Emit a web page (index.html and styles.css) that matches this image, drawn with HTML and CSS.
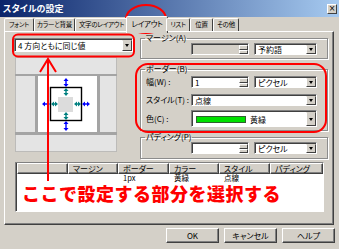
FILE: index.html
```html
<!DOCTYPE html>
<html lang="ja">
<head>
<meta charset="UTF-8">
<title>スタイルの設定</title>
<link rel="stylesheet" href="styles.css">
</head>
<body>
<div class="dlg">
  <div class="title">
    <span>スタイルの設定</span>
    <span class="close">×</span>
  </div>
  <div class="tabs">
    <div class="tab">フォント</div>
    <div class="tab">カラーと背景</div>
    <div class="tab">文字のレイアウト</div>
    <div class="tab on">レイアウト</div>
    <div class="tab">リスト</div>
    <div class="tab">位置</div>
    <div class="tab">その他</div>
  </div>
  <div class="panel">
    <div class="top">
      <div class="left">
        <div class="sel combo"><span class="v">4 方向ともに同じ値</span><span class="dd"></span></div>
        <svg class="pv" width="102" height="95" viewBox="0 0 102 95">
          <rect x="0.5" y="0.5" width="101" height="94" fill="#e4e4e4" stroke="#9c9c9c" stroke-dasharray="1 1"/>
          <rect x="0" y="17" width="102" height="2" fill="#a4a4a4"/>
          <rect x="0" y="75" width="102" height="3" fill="#a4a4a4"/>
          <rect x="20" y="19" width="3" height="56" fill="#a4a4a4"/>
          <rect x="82" y="19" width="3" height="56" fill="#a4a4a4"/>
          <rect x="23" y="19" width="59" height="56" fill="#fff"/>
          <rect x="43" y="40" width="15" height="15" fill="#dcdcdc"/>
          <rect x="35.5" y="30.5" width="31" height="33" fill="none" stroke="#000" stroke-width="1.4"/>
          <g stroke="#0000ff" stroke-width="1.4">
            <path d="M51 23V28M51 66V72M29 47H33M69 47H73"/>
          </g>
          <g fill="#0000ff">
            <path d="M48.5 24L51 21 53.5 24ZM48.5 27L51 30 53.5 27Z"/>
            <path d="M48.5 67L51 64 53.5 67ZM48.5 71L51 74 53.5 71Z"/>
            <path d="M30 44.5L27 47 30 49.5ZM32 44.5L35 47 32 49.5Z"/>
            <path d="M70 44.5L67 47 70 49.5ZM72 44.5L75 47 72 49.5Z"/>
          </g>
          <g stroke="#008080" stroke-width="1.4">
            <path d="M51 33V37M51 58V61M38 47H40M61 47H64"/>
          </g>
          <g fill="#008080">
            <path d="M48.5 34L51 31 53.5 34ZM48.5 36L51 39 53.5 36Z"/>
            <path d="M48.5 58L51 55 53.5 58ZM48.5 60L51 63 53.5 60Z"/>
            <path d="M39 44.5L36 47 39 49.5ZM40 44.5L43 47 40 49.5Z"/>
            <path d="M62 44.5L59 47 62 49.5ZM63 44.5L66 47 63 49.5Z"/>
          </g>
        </svg>
      </div>
      <div class="right">
        <fieldset class="grp g1">
          <legend>マージン(A)</legend>
          <div class="fld">
            <span class="lbl"></span>
            <div class="edit off"><span class="v"></span><span class="spn"><i></i><i></i></span></div>
            <div class="sel unit"><span class="v">予約語</span><span class="dd"></span></div>
          </div>
        </fieldset>
        <fieldset class="grp g2">
          <legend>ボーダー(B)</legend>
          <div class="fld">
            <span class="lbl">幅(W) :</span>
            <div class="edit"><span class="v">1</span><span class="spn"><i></i><i></i></span></div>
            <div class="sel unit"><span class="v">ピクセル</span><span class="dd"></span></div>
          </div>
          <div class="fld f2">
            <span class="lbl">スタイル(T) :</span>
            <div class="sel wide"><span class="v">点線</span><span class="dd"></span></div>
          </div>
          <div class="fld f3">
            <span class="lbl">色(C) :</span>
            <div class="sel wide color"><span class="sw"></span><span class="v">黄緑</span><span class="dd"></span></div>
          </div>
        </fieldset>
        <fieldset class="grp g3">
          <legend>パディング(P)</legend>
          <div class="fld">
            <span class="lbl"></span>
            <div class="edit"><span class="v"></span><span class="spn"><i></i><i></i></span></div>
            <div class="sel unit"><span class="v">ピクセル</span><span class="dd"></span></div>
          </div>
        </fieldset>
      </div>
    </div>
    <div class="list">
      <div class="hdr"><span></span><span>マージン</span><span>ボーダー</span><span>カラー</span><span>スタイル</span><span>パディング</span></div>
      <div class="row"><span></span><span></span><span>1px</span><span>黄緑</span><span>点線</span><span></span></div>
    </div>
  </div>
  <div class="btns">
    <div class="btn">OK</div>
    <div class="btn">キャンセル</div>
    <div class="btn">ヘルプ</div>
  </div>

  <svg class="marks" width="339" height="249" viewBox="0 0 339 249">
    <ellipse cx="146" cy="19" rx="20" ry="14" fill="none" stroke="#ff0000" stroke-width="2"/>
    <rect x="13" y="34.5" width="121" height="22" rx="5" fill="none" stroke="#ff0000" stroke-width="2"/>
    <rect x="136" y="64" width="190" height="68" rx="12" fill="none" stroke="#ff0000" stroke-width="2"/>
    <path d="M48 59V181M40 72L48 59 56 72" fill="none" stroke="#ff0000" stroke-width="2"/>
  </svg>
  <div class="note">ここで設定する部分を選択する</div>
</div>
</body>
</html>
```

FILE: styles.css
```css
* { box-sizing: border-box; }
body { margin: 0; background: #d4d0c8; font-family: "Noto Sans CJK JP", "Liberation Sans", sans-serif; font-size: 8px; line-height: 10px; font-feature-settings: "palt"; color: #000; }
.dlg { position: relative; width: 339px; height: 249px; background: #d4d0c8; overflow: hidden; }

.title { height: 17px; background: linear-gradient(to right, #0a246a, #a6caf0); color: #fff; font-weight: bold; font-size: 9px; display: flex; align-items: center; justify-content: space-between; padding: 0 2px 0 3px; }
.close { width: 10px; height: 10px; background: #d4d0c8; color: #000; border: 1px solid; border-color: #fff #404040 #404040 #fff; font-family: "DejaVu Sans", sans-serif; font-size: 8px; line-height: 7px; text-align: center; font-weight: normal; }

.tabs { position: relative; z-index: 1; display: flex; align-items: flex-start; height: 14px; padding-left: 4px; }
.tab { height: 13px; margin-top: 1px; border: 1px solid; border-bottom: 0; border-color: #fff #404040 transparent #fff; border-radius: 2px 2px 0 0; display: flex; justify-content: center; font-size: 6.5px; letter-spacing: -0.3px; line-height: 11px; white-space: nowrap; background: #d4d0c8; }
.tab:nth-child(1) { width: 30px; }
.tab:nth-child(2) { width: 41px; }
.tab:nth-child(3) { width: 53px; }
.tab:nth-child(4) { width: 42px; }
.tab:nth-child(5) { width: 24px; }
.tab:nth-child(6) { width: 23px; }
.tab:nth-child(7) { width: 26px; }
.tab.on { height: 17px; margin: -1px -2px 0; line-height: 14px; font-size: 7.5px; }

.panel { margin-left: 4px; width: 330px; height: 194px; border: 1px solid; border-color: #fff #404040 #404040 #fff; box-shadow: inset -1px -1px #808080; padding: 1px 5px 0 9px; }
.top { display: flex; gap: 7px; }
.left { width: 119px; padding-top: 5px; }
.right { width: 188px; }
.pv { display: block; margin: 5px 0 0 1px; }

.sel, .edit { display: flex; align-items: stretch; height: 12px; background: #fff; border: 1px solid; border-color: #808080 #fff #fff #808080; box-shadow: inset 1px 1px #404040; padding: 1px 0 0 1px; }
.sel .v, .edit .v { flex: 1; padding-left: 2px; line-height: 9px; white-space: nowrap; }
.dd { width: 10px; background: #d4d0c8; border: 1px solid; border-color: #d4d0c8 #404040 #404040 #fff; display: flex; align-items: center; justify-content: center; }
.dd::after { content: ""; border-left: 2px solid transparent; border-right: 2px solid transparent; border-top: 3px solid #000; }
.combo { height: 14px; }
.combo .v { line-height: 11px; }
.edit { width: 58px; }
.edit.off { background: #d4d0c8; }
.spn { width: 9px; display: flex; flex-direction: column; }
.spn i { flex: 1; background: #d4d0c8; border: 1px solid; border-color: #fff #404040 #404040 #fff; }
.unit { width: 63px; }
.wide { width: 126px; }
.color { height: 17px; align-items: center; }
.color .dd { align-self: stretch; }
.sw { width: 50px; height: 7px; margin-left: 3px; background: #00e000; border: 1px solid #306030; }
.color .v { padding-left: 4px; }

.grp { margin: 0; min-width: 0; border: 1px solid #8c8c8c; box-shadow: 1px 1px 0 #fff, inset 1px 1px 0 #fff; padding: 0 0 3px 4px; }
.grp legend { padding: 0 1px; line-height: 10px; }
.g2 { margin-top: 5px; }
.g3 { margin-top: 1px; padding-bottom: 4px; }
.fld { display: flex; align-items: center; gap: 5px; padding-left: 1px; }
.lbl { width: 40px; white-space: nowrap; }
.g2 .fld:first-of-type { margin-top: 2px; }
.f2 { margin-top: 6px; }
.f3 { margin-top: 4px; }

.list { margin: 3px 0 0 1px; width: 309px; height: 50px; background: #fff; border: 1px solid; border-color: #808080 #fff #fff #808080; box-shadow: inset 1px 1px #404040; padding: 0 0 0 1px; }
.hdr, .row { display: grid; grid-template-columns: 51px 50px 51px 50px 51px 1fr; }
.hdr span { height: 11px; background: #d4d0c8; border: 1px solid; border-color: #fff #404040 #404040 #fff; box-shadow: inset -1px -1px #808080; padding-left: 4px; line-height: 9px; white-space: nowrap; overflow: hidden; }
.row span { padding-left: 5px; font-size: 7.5px; line-height: 7px; }

.btns { display: flex; justify-content: flex-end; gap: 5px; padding: 3px 4px 0 0; }
.btn { width: 53px; height: 15px; border: 1px solid; border-color: #fff #404040 #404040 #fff; box-shadow: inset -1px -1px #808080; text-align: center; line-height: 13px; }

.marks { position: absolute; left: 0; top: 0; pointer-events: none; }
.note { position: absolute; left: 22px; top: 184px; color: #ff0000; font-size: 18px; line-height: 18px; font-weight: 900; letter-spacing: 0.5px; font-feature-settings: normal; white-space: nowrap; }
```
